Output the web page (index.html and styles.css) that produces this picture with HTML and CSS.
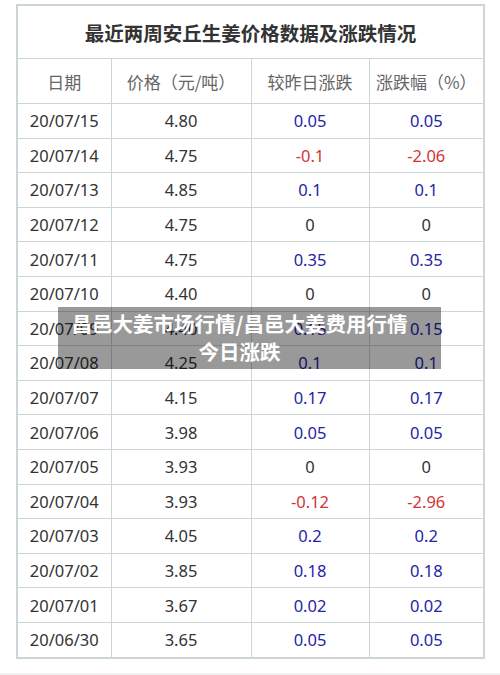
FILE: index.html
```html
<!DOCTYPE html>
<html>
<head>
    <title>安丘生姜价格</title>
    <link rel="stylesheet" href="styles.css">
</head>
<body>
    <div class="page">
        <table class="price-table">
            <colgroup>
                <col class="c-date">
                <col class="c-price">
                <col class="c-diff">
                <col class="c-rate">
            </colgroup>
            <tr class="title-row">
                <th colspan="4">最近两周安丘生姜价格数据及涨跌情况</th>
            </tr>
            <tr class="head-row">
                <td>日期</td>
                <td>价格（元/吨）</td>
                <td>较昨日涨跌</td>
                <td>涨跌幅（%）</td>
            </tr>
            <tr><td>20/07/15</td><td>4.80</td><td class="up">0.05</td><td class="up">0.05</td></tr>
            <tr><td>20/07/14</td><td>4.75</td><td class="down">-0.1</td><td class="down">-2.06</td></tr>
            <tr><td>20/07/13</td><td>4.85</td><td class="up">0.1</td><td class="up">0.1</td></tr>
            <tr><td>20/07/12</td><td>4.75</td><td>0</td><td>0</td></tr>
            <tr><td>20/07/11</td><td>4.75</td><td class="up">0.35</td><td class="up">0.35</td></tr>
            <tr><td>20/07/10</td><td>4.40</td><td>0</td><td>0</td></tr>
            <tr><td>20/07/09</td><td>4.40</td><td class="up">0.15</td><td class="up">0.15</td></tr>
            <tr><td>20/07/08</td><td>4.25</td><td class="up">0.1</td><td class="up">0.1</td></tr>
            <tr><td>20/07/07</td><td>4.15</td><td class="up">0.17</td><td class="up">0.17</td></tr>
            <tr><td>20/07/06</td><td>3.98</td><td class="up">0.05</td><td class="up">0.05</td></tr>
            <tr><td>20/07/05</td><td>3.93</td><td>0</td><td>0</td></tr>
            <tr><td>20/07/04</td><td>3.93</td><td class="down">-0.12</td><td class="down">-2.96</td></tr>
            <tr><td>20/07/03</td><td>4.05</td><td class="up">0.2</td><td class="up">0.2</td></tr>
            <tr><td>20/07/02</td><td>3.85</td><td class="up">0.18</td><td class="up">0.18</td></tr>
            <tr><td>20/07/01</td><td>3.67</td><td class="up">0.02</td><td class="up">0.02</td></tr>
            <tr><td>20/06/30</td><td>3.65</td><td class="up">0.05</td><td class="up">0.05</td></tr>
        </table>
        <!-- 图片上的标题遮罩 -->
        <div class="caption">昌邑大姜市场行情/昌邑大姜费用行情<br>今日涨跌</div>
    </div>
    <div class="bottom-bar"></div>
</body>
</html>
```

FILE: styles.css
```css
body {
    margin: 0;
    background-color: #fff;
    font-family: "Noto Sans", "Noto Sans CJK SC", sans-serif;
}
.page {
    position: relative;
    padding: 4px 17px 14px 16px;
}
.price-table {
    width: 467px;
    border-collapse: collapse;
    table-layout: fixed;
    border: 2px solid #cdd6d6;
}
.c-date { width: 94px; }
.c-price { width: 140px; }
.c-diff { width: 118px; }
.c-rate { width: 115px; }
.price-table td,
.price-table th {
    border: 1px solid #cdd6d6;
    text-align: center;
    padding: 0;
}
.price-table td {
    height: 33.6px;
    font-size: 16.5px;
    color: #333;
}
.title-row th {
    height: 52px;
    font-size: 19.5px;
    font-weight: bold;
    color: #333;
    font-family: "Noto Sans CJK SC", sans-serif;
}
.price-table .head-row td {
    height: 44px;
    font-size: 17px;
    color: #666;
    font-family: "Noto Sans CJK SC", sans-serif;
}
.price-table td.up {
    color: #2424a8;
}
.price-table td.down {
    color: #d23434;
}
.caption {
    position: absolute;
    left: 58px;
    top: 307px;
    width: 383px;
    height: 62px;
    background-color: rgba(0, 0, 0, 0.4);
    color: #fff;
    font-family: "Noto Sans CJK SC", sans-serif;
    font-weight: bold;
    font-size: 20.5px;
    line-height: 28px;
    text-align: center;
    padding: 2px 20px 0 0;
    box-sizing: border-box;
    white-space: nowrap;
}
.bottom-bar {
    height: 4px;
    background-color: #f2f2f2;
}
```
